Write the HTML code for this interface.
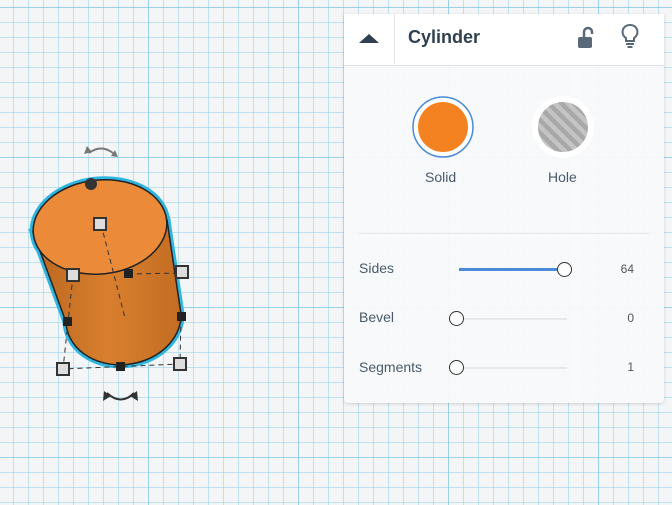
<!DOCTYPE html>
<html><head><meta charset="utf-8"><style>
html,body{margin:0;padding:0}
body{width:672px;height:505px;overflow:hidden;position:relative;font-family:"Liberation Sans",sans-serif;
background-color:#f3f5f6;
background-image:
linear-gradient(90deg,rgba(110,190,225,.45) 1px,transparent 1px),
linear-gradient(0deg,rgba(110,190,225,.45) 1px,transparent 1px),
linear-gradient(90deg,rgba(140,205,230,.5) 1px,transparent 1px),
linear-gradient(0deg,rgba(140,205,230,.5) 1px,transparent 1px);
background-size:150px 150px,150px 150px,15px 15px,15px 15px;
background-position:-2px 8px,-2px 8px,-2px 8px,-2px 8px;}
#panel{position:absolute;left:344px;top:14px;width:320px;height:389px;background:rgba(248,249,250,.94);border-radius:0 0 4px 4px;box-shadow:0 1px 3px rgba(0,0,0,.15)}
#hdr{height:51px;background:#fff;border-bottom:1px solid #dde1e5;position:relative}
#hdr .sep{position:absolute;left:50px;top:0;width:1px;height:50px;background:#e2e5e8}
#hdr .t{position:absolute;left:64px;top:13px;font-size:18px;font-weight:bold;color:#2f4050}
.lbl{position:absolute;font-size:14px;color:#4a5a6a}
.track{position:absolute;height:2px;background:#e6e8ea}
.knob{position:absolute;width:13px;height:13px;border:1.5px solid #333;border-radius:50%;background:#fff}
.val{position:absolute;font-size:12px;color:#555;text-align:right;width:30px}
</style></head><body>
<svg width="672" height="505" style="position:absolute;left:0;top:0">
<path d="M89,153 Q101,144 113,153" fill="none" stroke="#777" stroke-width="2"/>
<path d="M84,154 l3,-8 l5,6z M118,157 l-7,-1 l4,-6z" fill="#777"/>
<path d="M107,393 Q121,406 134,393" fill="none" stroke="#333" stroke-width="2"/>
<path d="M103,401 l1,-10 l7,5z M138,401 l-1,-10 l-7,5z" fill="#333"/>
<g fill="#2fb5e0" stroke="#2fb5e0" stroke-width="7">
<path d="M33,232 L66,322 A57,46 -8 0 0 181,314 L167,220 Z"/>
<ellipse cx="100" cy="227" rx="67" ry="47" transform="rotate(-6 100 227)"/>
</g>
<defs><linearGradient id="g" x1="0" x2="1"><stop offset="0" stop-color="#b8661f"/><stop offset=".5" stop-color="#d97f2e"/><stop offset="1" stop-color="#c36d24"/></linearGradient></defs>
<path d="M33,232 L66,322 A57,46 -8 0 0 181,314 L167,220 Z" fill="url(#g)" stroke="#222" stroke-width="1.5"/>
<ellipse cx="100" cy="227" rx="67" ry="47" transform="rotate(-6 100 227)" fill="#eb8a39" stroke="#222" stroke-width="1.5"/>
<g stroke="#333" stroke-dasharray="5,4" fill="none" stroke-width="1">
<path d="M101,224 L125,318"/><path d="M128,274 L182,273"/><path d="M73,276 L68,322 L63,369 L180,364 L181,317"/>
</g>
<circle cx="91" cy="184" r="6" fill="#333"/>
<g fill="#222"><rect x="124" y="269" width="9" height="9"/><rect x="63" y="317" width="9" height="9"/><rect x="177" y="312" width="9" height="9"/><rect x="116" y="362" width="9" height="9"/></g>
<g fill="#ddd" stroke="#333" stroke-width="2"><rect x="94" y="218" width="12" height="12"/><rect x="67" y="269" width="12" height="12"/><rect x="176" y="266" width="12" height="12"/><rect x="57" y="363" width="12" height="12"/><rect x="174" y="358" width="12" height="12"/></g>
</svg>
<div id="panel">
<div id="hdr">
<svg width="50" height="50" style="position:absolute;left:0;top:0"><path d="M15,29 L25,20 L35,29Z" fill="#2f4050"/></svg>
<div class="sep"></div>
<div class="t">Cylinder</div>
<svg width="24" height="28" style="position:absolute;left:231px;top:10px"><path d="M9,13 V8 a4,4 0 0 1 8,0 V10" fill="none" stroke="#5a6978" stroke-width="2.5"/><rect x="3" y="13" width="14" height="11" rx="2" fill="#5a6978"/></svg>
<svg width="24" height="28" style="position:absolute;left:274px;top:8px"><path d="M12,3 a7,7 0 0 1 4,13 v3 h-8 v-3 a7,7 0 0 1 4,-13z" fill="none" stroke="#5a6978" stroke-width="2"/><rect x="8" y="21" width="8" height="2" fill="#5a6978"/><rect x="9.5" y="24" width="5" height="2" fill="#5a6978"/></svg>
</div>
<svg width="320" height="120" style="position:absolute;left:0;top:66px">
<circle cx="99" cy="47" r="30" fill="#fff" stroke="#4a8ad8" stroke-width="1.5"/>
<circle cx="99" cy="47" r="25" fill="#f58220"/>
<circle cx="219" cy="47" r="31" fill="#fff"/>
<defs><pattern id="st" width="9" height="9" patternUnits="userSpaceOnUse" patternTransform="rotate(-45)"><rect width="9" height="9" fill="#c4c4c4"/><rect width="4.5" height="9" fill="#a8a8a8"/></pattern></defs>
<circle cx="219" cy="47" r="25" fill="url(#st)"/>
</svg>
<div class="lbl" style="left:81px;top:155px">Solid</div>
<div class="lbl" style="left:204px;top:155px">Hole</div>
<div style="position:absolute;left:15px;top:219px;width:290px;height:1px;background:#e6e8ea"></div>
<div class="lbl" style="left:15px;top:246px">Sides</div>
<div class="track" style="left:115px;top:254px;width:100px;background:#4a8ad8;height:3px"></div>
<div class="knob" style="left:213px;top:248px"></div>
<div class="val" style="left:260px;top:248px">64</div>
<div class="lbl" style="left:15px;top:295px">Bevel</div>
<div class="track" style="left:115px;top:304px;width:108px"></div>
<div class="knob" style="left:105px;top:297px"></div>
<div class="val" style="left:260px;top:297px">0</div>
<div class="lbl" style="left:15px;top:345px">Segments</div>
<div class="track" style="left:115px;top:353px;width:108px"></div>
<div class="knob" style="left:105px;top:346px"></div>
<div class="val" style="left:260px;top:346px">1</div>
</div>
</body></html>
